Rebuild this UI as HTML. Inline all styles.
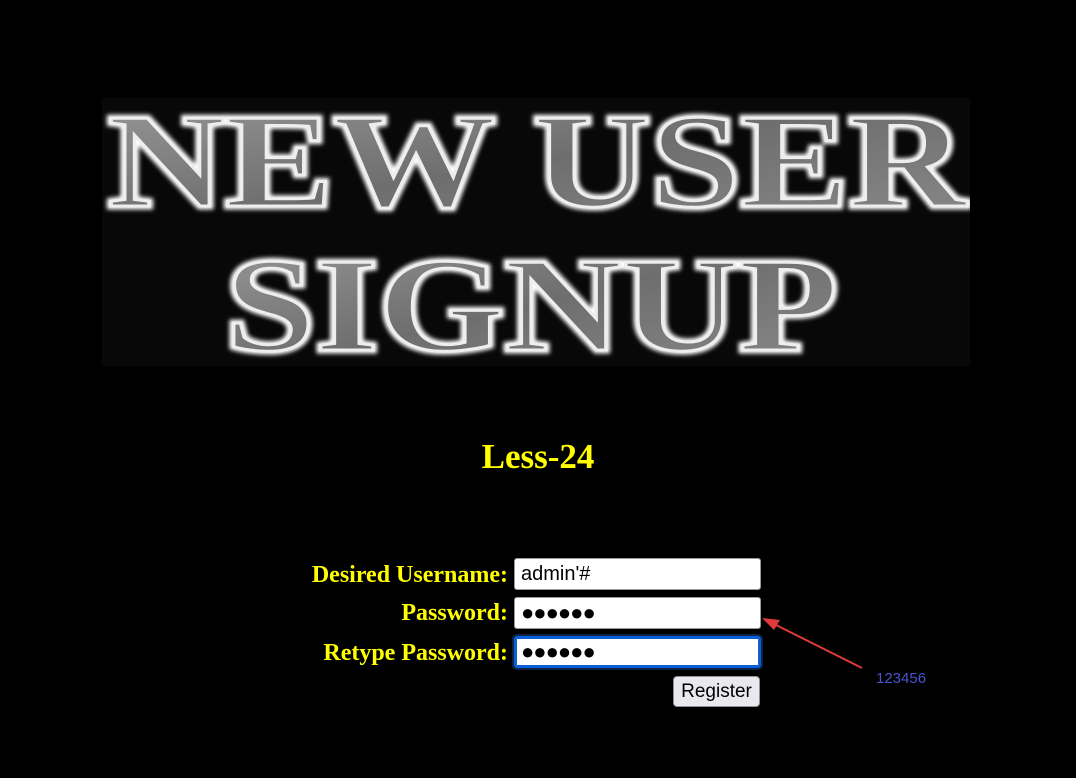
<!DOCTYPE html>
<html><head><style>
body{margin:0;background:#000;width:1076px;height:778px;overflow:hidden;position:relative;font-family:"Liberation Serif",serif}
.lbl{position:absolute;right:568px;color:#ff0;font-weight:bold;font-size:24px;line-height:32px}
.inp{position:absolute;left:514px;background:#fff;border:1px solid #999;border-radius:3px;font-family:"Liberation Sans",sans-serif;font-size:20px;line-height:30px;padding-left:6px;box-sizing:border-box;width:247px;height:32px;color:#000}
</style></head><body>
<svg style="position:absolute;left:102px;top:98px" width="868" height="268">
<defs><linearGradient id="g" x1="0" y1="0" x2="1" y2="1"><stop offset="0" stop-color="#9a9a9a"/><stop offset="0.5" stop-color="#6e6e6e"/><stop offset="1" stop-color="#8a8a8a"/></linearGradient>
<filter id="f"><feGaussianBlur stdDeviation="2"/></filter></defs>
<rect width="868" height="268" fill="#080808"/>
<g font-family="Liberation Serif,serif" font-weight="bold" font-size="134">
<text x="6" y="108" textLength="858" lengthAdjust="spacingAndGlyphs" fill="none" stroke="#fff" stroke-width="7" filter="url(#f)">NEW USER</text>
<text x="6" y="108" textLength="858" lengthAdjust="spacingAndGlyphs" fill="url(#g)" stroke="#eee" stroke-width="3">NEW USER</text>
<text x="123" y="252" textLength="613" lengthAdjust="spacingAndGlyphs" fill="none" stroke="#fff" stroke-width="7" filter="url(#f)">SIGNUP</text>
<text x="123" y="252" textLength="613" lengthAdjust="spacingAndGlyphs" fill="url(#g)" stroke="#eee" stroke-width="3">SIGNUP</text>
</g></svg>
<div style="position:absolute;left:0;width:1076px;top:436px;text-align:center;color:#ff0;font-weight:bold;font-size:35px;line-height:42px">Less-24</div>
<div class="lbl" style="top:559px">Desired Username:</div>
<div class="lbl" style="top:597px">Password:</div>
<div class="lbl" style="top:637px">Retype Password:</div>
<div class="inp" style="top:558px">admin'#</div>
<div class="inp" style="top:597px;font-size:22px;letter-spacing:-1px">●●●●●●</div>
<div class="inp" style="top:636px;border:3px solid #0a5fd6;box-shadow:0 0 0 2px #0b2345;font-size:22px;letter-spacing:-1px;padding-left:4px;line-height:26px">●●●●●●</div>
<div style="position:absolute;left:673px;top:676px;width:87px;height:31px;box-sizing:border-box;background:#e9e9ed;border:1px solid #8f8f9d;border-radius:4px;font-family:'Liberation Sans',sans-serif;font-size:19px;line-height:29px;text-align:center">Register</div>
<svg style="position:absolute;left:0;top:0" width="1076" height="778">
<line x1="862" y1="668" x2="770" y2="622" stroke="#e03a3a" stroke-width="2"/>
<polygon points="762,618 780,620 774,630" fill="#e03a3a"/>
</svg>
<div style="position:absolute;left:876px;top:670px;color:#4455cc;font-family:'Liberation Sans',sans-serif;font-size:15px">123456</div>
</body></html>
